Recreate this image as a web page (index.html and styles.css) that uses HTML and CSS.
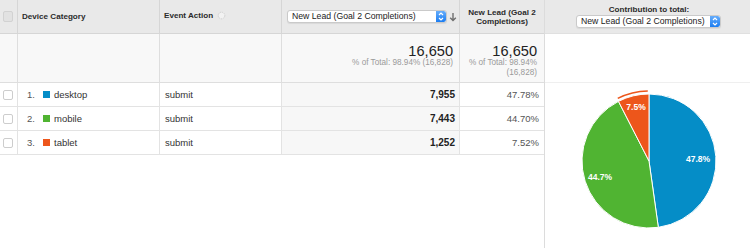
FILE: index.html
```html
<!DOCTYPE html>
<html>
<head>
<meta charset="utf-8">
<link rel="stylesheet" href="styles.css">
</head>
<body>
<div class="report">
  <div class="table">
    <!-- header -->
    <div class="c h chk-cell"><span class="chk chk-h"></span></div>
    <div class="c h dim-h">Device Category</div>
    <div class="c h dim-h ev-h">Event Action
      <svg class="ev-icon" width="9" height="9" viewBox="0 0 9 9"><circle cx="4.5" cy="4.5" r="3.3" fill="#f2f2f2" stroke="#cfcfcf" stroke-width="1" stroke-dasharray="1.4 0.8"/></svg>
    </div>
    <div class="c h metric-h">
      <div class="select sel-metric"><span class="sel-text">New Lead (Goal 2 Completions)</span><span class="stepper"><svg width="10" height="13" viewBox="0 0 10 13"><path d="M3 5 L5 3 L7 5 M3 8 L5 10 L7 8" fill="none" stroke="#fff" stroke-width="1.2"/></svg></span></div>
      <svg class="sort-arrow" width="8" height="10" viewBox="0 0 8 10"><path d="M4 1 V8.5 M1.2 5.8 L4 8.6 L6.8 5.8" fill="none" stroke="#6f6f6f" stroke-width="1.4"/></svg>
    </div>
    <div class="c h col-h last">New Lead (Goal 2<br>Completions)</div>

    <!-- totals -->
    <div class="c tot"></div>
    <div class="c tot"></div>
    <div class="c tot"></div>
    <div class="c tot tot-val metric-tot"><span class="big">16,650</span><span class="small">% of Total: 98.94% (16,828)</span></div>
    <div class="c tot tot-val pct-tot last"><span class="big">16,650</span><span class="small">% of Total: 98.94%<br>(16,828)</span></div>

    <!-- row 1 -->
    <div class="c r chk-cell"><span class="chk"></span></div>
    <div class="c r dim"><span class="num">1.</span><span class="sq blue"></span>desktop</div>
    <div class="c r ev">submit</div>
    <div class="c r val sorted">7,955</div>
    <div class="c r pct last">47.78%</div>

    <!-- row 2 -->
    <div class="c r chk-cell"><span class="chk"></span></div>
    <div class="c r dim"><span class="num">2.</span><span class="sq green"></span>mobile</div>
    <div class="c r ev">submit</div>
    <div class="c r val sorted">7,443</div>
    <div class="c r pct last">44.70%</div>

    <!-- row 3 -->
    <div class="c r chk-cell"><span class="chk"></span></div>
    <div class="c r dim"><span class="num">3.</span><span class="sq orange"></span>tablet</div>
    <div class="c r ev">submit</div>
    <div class="c r val sorted">1,252</div>
    <div class="c r pct last">7.52%</div>
  </div>

  <div class="pie-panel">
    <div class="pie-head">
      <div class="pie-title">Contribution to total:</div>
      <div class="select sel-pie"><span class="sel-text">New Lead (Goal 2 Completions)</span><span class="stepper"><svg width="10" height="13" viewBox="0 0 10 13"><path d="M3 5 L5 3 L7 5 M3 8 L5 10 L7 8" fill="none" stroke="#fff" stroke-width="1.2"/></svg></span></div>
    </div>
    <div class="pie-gap"></div>
    <svg class="pie" width="205" height="165" viewBox="0 0 205 165">
      <path d="M104 78 L104 11 A67 67 0 0 1 113.33 144.35 Z" fill="#058dc7" stroke="#fff" stroke-width="1"/>
      <path d="M104 78 L113.33 144.35 A67 67 0 0 1 73.48 18.36 Z" fill="#50b432" stroke="#fff" stroke-width="1"/>
      <path d="M104 78 L73.48 18.36 A67 67 0 0 1 104 11 Z" fill="#ed561b" stroke="#fff" stroke-width="1"/>
      <path d="M72.76 15.36 A70 70 0 0 1 102.78 8.01" fill="none" stroke="#ed561b" stroke-width="1.6"/>
      <text x="153" y="79" class="pie-lbl">47.8%</text>
      <text x="55" y="97" class="pie-lbl">44.7%</text>
      <text x="91" y="27" class="pie-lbl">7.5%</text>
    </svg>
  </div>
</div>
</body>
</html>
```

FILE: styles.css
```css
html, body {
  margin: 0;
  padding: 0;
  background: #fff;
}

body {
  font-family: "Liberation Sans", Arial, sans-serif;
  color: #333;
  width: 750px;
  height: 248px;
  overflow: hidden;
}

.report {
  display: flex;
  height: 248px;
}

.table {
  display: grid;
  grid-template-columns: 18px 142px 122px 178px 84px;
  grid-auto-rows: 24px;
  grid-template-rows: 34px 49px;
  align-content: start;
}

.c {
  box-sizing: border-box;
  border-right: 1px solid #dedede;
  border-bottom: 1px solid #dedede;
  display: flex;
  align-items: center;
  font-size: 9.5px;
  white-space: nowrap;
}

.c.last {
  border-right: none;
}

/* header */
.h {
  background: #e9e9e9;
  font-size: 8.1px;
  font-weight: bold;
  color: #2b2b2b;
  border-bottom-color: #d6d6d6;
  border-right-color: #d6d6d6;
}

.chk-cell {
  padding-left: 3px;
}

.chk {
  box-sizing: border-box;
  width: 10px;
  height: 10px;
  border: 1px solid #cdcdcd;
  border-radius: 2px;
  background: #fff;
}

.chk-h {
  background: #e2e2e2;
  border-color: #d2d2d2;
  height: 11px;
}

.dim-h {
  padding-left: 4px;
}

.ev-h {
  padding-bottom: 2px;
}

.ev-icon {
  margin-left: 4px;
}

.metric-h {
  padding-left: 5px;
}

.select {
  box-sizing: border-box;
  display: flex;
  align-items: stretch;
  height: 13px;
  background: #fff;
  border: 1px solid #cacaca;
  border-radius: 3px;
  box-shadow: 0 1px 1px rgba(0, 0, 0, 0.07);
  overflow: hidden;
}

.sel-metric {
  width: 160px;
}

.sel-text {
  flex: 1;
  font-size: 8.7px;
  font-weight: normal;
  color: #222;
  line-height: 11px;
  padding-left: 4px;
}

.stepper {
  width: 10px;
  display: flex;
  align-items: center;
  justify-content: center;
  background: linear-gradient(#66adfb, #1b7df2);
  border-radius: 0 2px 2px 0;
}

.stepper svg {
  display: block;
}

.sort-arrow {
  margin-left: 2px;
}

.col-h {
  justify-content: center;
  text-align: center;
  line-height: 9.5px;
  padding-top: 1px;
}

/* totals */
.tot {
  background: #f8f8f8;
}

.tot-val {
  flex-direction: column;
  align-items: flex-end;
  justify-content: flex-start;
  padding-top: 10px;
  text-align: right;
}

.metric-tot {
  padding-right: 6px;
}

.pct-tot {
  padding-right: 7px;
}

.big {
  font-size: 14.6px;
  line-height: 14px;
  color: #222;
}

.small {
  font-size: 8.2px;
  line-height: 9.5px;
  color: #9a9a9a;
}

/* rows */
.r {
  border-bottom-color: #e3e3e3;
  border-right-color: #e3e3e3;
}

.dim {
  padding-left: 9px;
}

.num {
  width: 16px;
  color: #555;
}

.sq {
  width: 7px;
  height: 7px;
  margin-right: 4px;
}

.blue { background: #058dc7; }
.green { background: #50b432; }
.orange { background: #ed561b; }

.ev {
  padding-left: 5px;
}

.val {
  justify-content: flex-end;
  padding-right: 4px;
  font-weight: bold;
  font-size: 10px;
  color: #222;
}

.sorted {
  background: #f7f7f7;
}

.pct {
  justify-content: flex-end;
  padding-right: 5px;
  color: #555;
}

/* pie panel */
.pie-panel {
  width: 206px;
  box-sizing: border-box;
  border-left: 1px solid #dcdcdc;
  display: flex;
  flex-direction: column;
}

.pie-head {
  box-sizing: border-box;
  height: 34px;
  background: #e9e9e9;
  border-bottom: 1px solid #e0e0e0;
  display: flex;
  flex-direction: column;
  align-items: center;
  padding-top: 5px;
}

.pie-title {
  font-size: 8.1px;
  font-weight: bold;
  color: #2b2b2b;
  line-height: 9px;
  margin-bottom: 1px;
  padding-left: 3px;
}

.sel-pie {
  width: 145px;
  margin-left: 2px;
}

.pie-gap {
  box-sizing: border-box;
  height: 49px;
  border-bottom: 1px solid #efefef;
}

.pie {
  display: block;
}

.pie-lbl {
  fill: #fff;
  font-family: "Liberation Sans", Arial, sans-serif;
  font-size: 8.5px;
  font-weight: bold;
  text-anchor: middle;
}
```
